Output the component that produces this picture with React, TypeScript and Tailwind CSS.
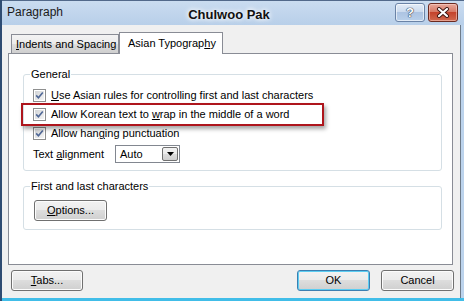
import React from 'react';

const Check: React.FC = () => (
    <span className="w-[13px] h-[13px] shrink-0 border border-[#8e8f8f] bg-white p-px flex">
        <span className="flex-1 bg-[linear-gradient(135deg,#d2d4d6,#f4f4f4)] flex items-center justify-center">
            <svg width="9" height="9" viewBox="0 0 9 9">
                <path d="M1.2 4.4 L3.4 6.8 L7.8 1.4" stroke="#4f6796" strokeWidth="1.6" fill="none" />
            </svg>
        </span>
    </span>
);

const Row: React.FC<{ children: React.ReactNode }> = ({ children }) => (
    <div className="h-[19px] flex items-center gap-[5px]">
        <Check />
        <span>{children}</span>
    </div>
);

const Btn: React.FC<{ children: React.ReactNode; className?: string; focused?: boolean }> = ({ children, className = '', focused }) => (
    <div
        className={`h-[21px] rounded-[3px] border flex items-center justify-center bg-[linear-gradient(to_bottom,#f2f2f2_0%,#ebebeb_50%,#dddddd_50%,#cfcfcf_100%)] ${
            focused ? 'border-[#3c7fb1] shadow-[inset_0_0_0_1px_#5ccdf2]' : 'border-[#707070] shadow-[inset_0_0_0_1px_#fcfcfc]'
        } ${className}`}
    >
        {children}
    </div>
);

const App: React.FC = () => {
    return (
        <div className="w-[464px] h-[301px] flex flex-col overflow-hidden bg-[#bcd3ec] border-l-2 border-[#2f4c72] font-['Liberation_Sans',Arial,sans-serif] text-[11px] text-black relative">
            {/* title bar */}
            <div className="h-[25px] shrink-0 flex items-start border-t border-[#52698a] bg-[linear-gradient(to_bottom,#cadcf0,#b8cfe9)] pl-[5px] pr-[6px]">
                <span className="text-[12px] leading-[22px] text-[#1a1a1a]">Paragraph</span>
                <span className="flex-1 text-center text-[13px] font-bold leading-[24px] pt-[2px] text-[#111] [text-shadow:0_0_6px_#ffffff,0_0_4px_#ffffff]">
                    Chulwoo Pak
                </span>
                <div className="flex gap-[3px] mt-[2px]">
                    <div className="w-[30px] h-[19px] rounded-[3px] border border-[#6a83a6] bg-[linear-gradient(to_bottom,#e3ecf7_0%,#c9d9ed_50%,#adc4e2_50%,#b9d0ea_100%)] shadow-[inset_0_0_0_1px_rgba(255,255,255,0.6)] flex items-center justify-center">
                        <span className="text-[13px] font-bold leading-none text-white [text-shadow:0_0_1px_#2b3b55,0_0_1px_#2b3b55,0_0_1px_#2b3b55]">?</span>
                    </div>
                    <div className="w-[30px] h-[19px] rounded-[3px] border border-[#6b2a20] bg-[linear-gradient(to_bottom,#e9a89a_0%,#d67a67_45%,#c4432c_50%,#d0694f_100%)] shadow-[inset_0_0_0_1px_rgba(255,220,210,0.5)] flex items-center justify-center">
                        <svg width="14" height="11" viewBox="0 0 14 11">
                            <path d="M3 2 L11 9 M11 2 L3 9" stroke="#3a1410" strokeWidth="4" strokeLinecap="round" />
                            <path d="M3 2 L11 9 M11 2 L3 9" stroke="#ffffff" strokeWidth="2.2" strokeLinecap="round" />
                        </svg>
                    </div>
                </div>
            </div>

            {/* client area */}
            <div className="flex-1 mr-[3px] bg-[#f0f0f0] border-r border-[#6f7c8a] flex flex-col">
                <div className="flex items-end pt-[7px] ml-[9px] h-[28px]">
                    <div className="w-[108px] h-[19px] border border-b-0 border-[#898c95] bg-[linear-gradient(to_bottom,#f3f3f3_0%,#ebebeb_50%,#dddddd_50%,#cfcfcf_100%)] flex items-center pl-[4px]">
                        <span>
                            <span className="underline underline-offset-1">I</span>ndents and Spacing
                        </span>
                    </div>
                    <div className="w-[104px] h-[22px] -mb-px border border-b-0 border-[#898c95] bg-white flex items-center pl-[8px] relative z-10">
                        <span>
                            Asian Typograp<span className="underline underline-offset-1">h</span>y
                        </span>
                    </div>
                </div>

                {/* tab panel */}
                <div className="ml-[6px] w-[445px] h-[212px] border border-[#898c95] bg-white flex flex-col">
                    <fieldset className="mt-[14px] ml-[14px] w-[419px] border border-[#d5dfe5] rounded-[3px]">
                        <legend className="ml-[6px] px-[1px] leading-[13px]">General</legend>
                        <div className="pl-[9px] pt-[5px] pb-[7px]">
                            <Row>
                                <span className="underline underline-offset-1">U</span>se Asian rules for controlling first and last characters
                            </Row>
                            <Row>
                                Allow Korean text to <span className="underline underline-offset-1">w</span>rap in the middle of a word
                            </Row>
                            <Row>
                                Allow han<span className="underline underline-offset-1">g</span>ing punctuation
                            </Row>
                            <div className="mt-[2px] h-[18px] flex items-center">
                                <span className="w-[82px]">
                                    Text <span className="underline underline-offset-1">a</span>lignment
                                </span>
                                <div className="w-[65px] h-[18px] border border-[#828790] bg-white flex items-center pl-[4px] pr-px">
                                    <span className="flex-1">Auto</span>
                                    <div className="w-[16px] h-[14px] border border-[#707070] rounded-[2px] bg-[linear-gradient(to_bottom,#f2f2f2_0%,#ebebeb_50%,#dddddd_50%,#cfcfcf_100%)] flex items-center justify-center">
                                        <svg width="7" height="4" viewBox="0 0 7 4">
                                            <path d="M0 0 H7 L3.5 4 Z" fill="#000" />
                                        </svg>
                                    </div>
                                </div>
                            </div>
                        </div>
                    </fieldset>

                    <fieldset className="mt-[9px] ml-[14px] w-[419px] border border-[#d5dfe5] rounded-[3px]">
                        <legend className="ml-[6px] px-[1px] leading-[13px]">First and last characters</legend>
                        <div className="pl-[10px] pt-[7px] pb-[8px]">
                            <Btn className="w-[73px]">
                                <span>
                                    <span className="underline underline-offset-1">O</span>ptions...
                                </span>
                            </Btn>
                        </div>
                    </fieldset>
                </div>

                {/* dialog buttons */}
                <div className="mt-[5px] ml-[9px] mr-[6px] flex items-center">
                    <Btn className="w-[72px]">
                        <span>
                            <span className="underline underline-offset-1">T</span>abs...
                        </span>
                    </Btn>
                    <div className="flex-1" />
                    <Btn className="w-[73px]" focused>
                        OK
                    </Btn>
                    <Btn className="w-[73px] ml-[11px]">Cancel</Btn>
                </div>
            </div>
            <div className="h-[3px] shrink-0 bg-[#41bde8]" />

            {/* highlight */}
            <div className="absolute left-[19px] top-[103px] w-[303px] h-[23px] border-2 border-[#ae151c] shadow-[2px_3px_4px_rgba(0,0,0,0.35)] pointer-events-none" />
        </div>
    );
};

export default App;
